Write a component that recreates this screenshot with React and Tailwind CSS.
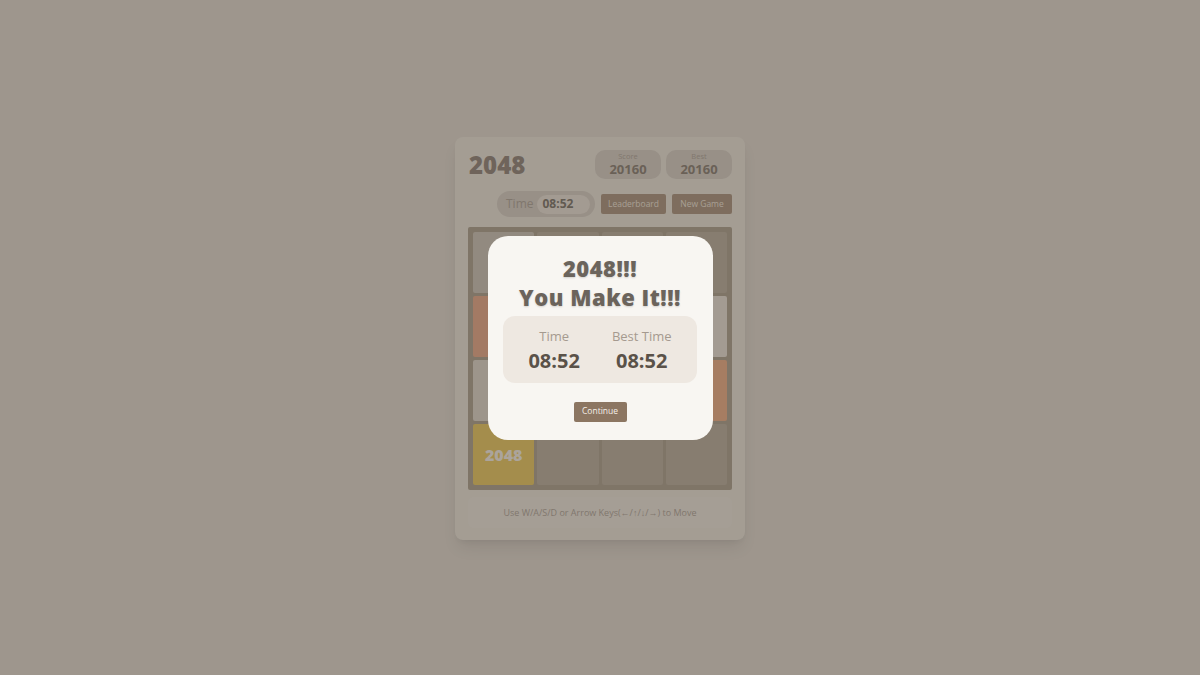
import React from "react";

const font = { fontFamily: '"Open Sans", "Noto Sans", sans-serif' };

const tiles = [
  { v: 2, bg: "bg-[#b7aa99]" },
  { v: 0 },
  { v: 0 },
  { v: 0 },
  { v: 8, bg: "bg-[#d4906c]" },
  { v: 0 },
  { v: 0 },
  { v: 4, bg: "bg-[#d4c6b7]" },
  { v: 4, bg: "bg-[#cabcac]" },
  { v: 0 },
  { v: 0 },
  { v: 16, bg: "bg-[#d99568]" },
  { v: 2048, bg: "bg-[#d6b043]" },
  { v: 0 },
  { v: 0 },
  { v: 0 },
];

const ScoreBox = ({ label, value }) => (
  <div className="w-[66px] h-[29px] rounded-[10px] bg-[#c1b4a5] flex flex-col items-center justify-center">
    <span className="text-[7.5px] leading-[9px] text-[#9b8b7b]">{label}</span>
    <span className="text-[13px] leading-[16px] font-bold text-[#756655]">{value}</span>
  </div>
);

const App = () => {
  return (
    <div className="min-h-screen w-full bg-[#cbbeaf] flex justify-center pt-[137px]" style={font}>
      {/* game card */}
      <div className="w-[290px] h-[403px] rounded-lg bg-[#d5caba] shadow-lg px-[13px] pt-[13px]">
        <div className="flex items-center justify-between">
          <h1 className="pl-px text-[24px] leading-none font-extrabold text-[#7d6c5c]">2048</h1>
          <div className="flex gap-[5px]">
            <ScoreBox label="Score" value="20160" />
            <ScoreBox label="Best" value="20160" />
          </div>
        </div>

        <div className="mt-[12px] flex items-center justify-end gap-[6px]">
          <div className="w-[98px] h-[26px] rounded-full bg-[#c1b4a5] flex items-center pl-[9px] pr-[5px] gap-[3px]">
            <span className="text-[12px] text-[#9a8a7a]">Time</span>
            <span className="flex-1 h-[19px] rounded-full bg-[#d4c6b7] flex items-center pl-[6px] text-[12px] font-bold text-[#675a4b]">
              08:52
            </span>
          </div>
          <button className="w-[65px] h-[20px] rounded-[2px] bg-[#967b61] text-[8.5px] text-[#dccbbb]">Leaderboard</button>
          <button className="w-[60px] h-[20px] rounded-[2px] bg-[#967b61] text-[8.5px] text-[#dccbbb]">New Game</button>
        </div>

        <div className="mt-[10px] w-[264px] h-[263px] rounded-[2px] bg-[#988770] p-[5px] grid grid-cols-4 grid-rows-4 gap-[3px]">
          {tiles.map((t, i) => (
            <div
              key={i}
              className={`rounded-[2px] flex items-center justify-center ${t.bg ? t.bg : "bg-[#a5947f]"}`}
            >
              {t.v > 0 && (
                <span className="text-[16px] font-extrabold text-[#e2d6c8]">{t.v}</span>
              )}
            </div>
          ))}
        </div>

        <div className="mt-[7px] h-[31px] rounded-md bg-[#d7ccbd] flex items-center justify-center text-[9px] text-[#9a8a7a]">
          Use W/A/S/D or Arrow Keys(←/↑/↓/→) to Move
        </div>
      </div>

      {/* overlay */}
      <div className="fixed inset-0 bg-[#5b5b5b]/40" />

      {/* win dialog */}
      <div className="fixed inset-0 flex items-center justify-center">
        <div className="w-[225px] h-[204px] rounded-[20px] bg-[#f8f6f2] flex flex-col items-center pt-[18px]">
          <h2
            className="text-[22px] leading-[29px] font-extrabold text-[#6b645c] text-center tracking-[0.5px]"
            style={{ textShadow: "0 1px 2px rgba(0,0,0,0.15)" }}
          >
            2048!!!
            <br />
            You Make It!!!
          </h2>
          <div className="mt-[4px] w-[194px] h-[67px] rounded-[12px] bg-[#eee8e1] flex justify-center gap-[32px] pt-[12px]">
            <div className="flex flex-col items-center">
              <span className="text-[13px] leading-[16px] text-[#a59a8f]">Time</span>
              <span className="mt-[4px] text-[20px] leading-[26px] font-bold text-[#5a5249]">08:52</span>
            </div>
            <div className="flex flex-col items-center">
              <span className="text-[13px] leading-[16px] text-[#a59a8f]">Best Time</span>
              <span className="mt-[4px] text-[20px] leading-[26px] font-bold text-[#5a5249]">08:52</span>
            </div>
          </div>
          <button className="mt-[19px] w-[53px] h-[20px] rounded-[2px] bg-[#8c7662] text-[8.5px] text-[#f5efe8]">
            Continue
          </button>
        </div>
      </div>
    </div>
  );
};

export default App;
